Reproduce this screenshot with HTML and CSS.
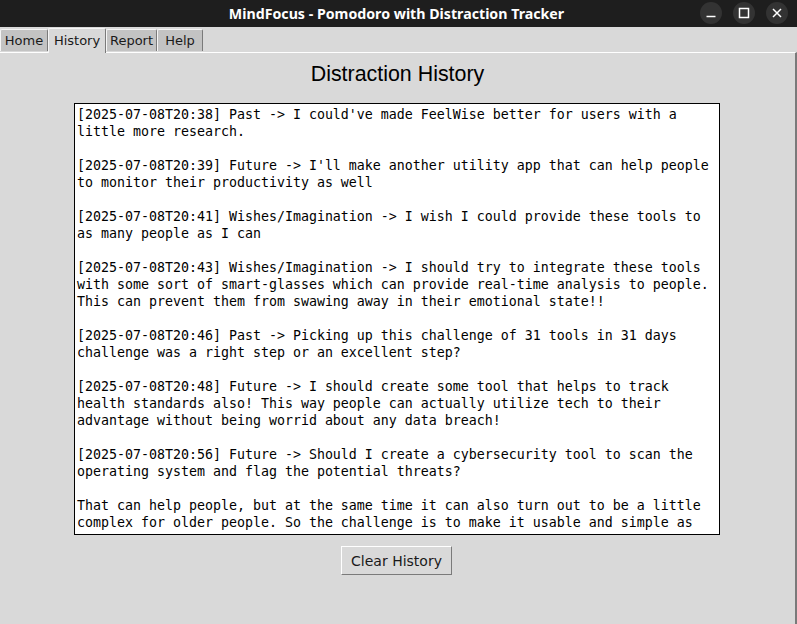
FILE: index.html
```html
<!DOCTYPE html>
<html>
<head>
<meta charset="utf-8">
<link rel="stylesheet" href="styles.css">
</head>
<body>
<div class="window">
  <div class="titlebar">
    <div class="title">MindFocus - Pomodoro with Distraction Tracker</div>
    <div class="controls">
      <span class="ctl"><svg width="22" height="22" viewBox="0 0 22 22"><line x1="6.5" y1="14.5" x2="15.5" y2="14.5" stroke="#fff" stroke-width="1.5"/></svg></span>
      <span class="ctl"><svg width="22" height="22" viewBox="0 0 22 22"><rect x="6.5" y="6.5" width="9" height="9" fill="none" stroke="#fff" stroke-width="1.5"/></svg></span>
      <span class="ctl"><svg width="22" height="22" viewBox="0 0 22 22"><path d="M7 7 L15 15 M15 7 L7 15" stroke="#fff" stroke-width="1.5"/></svg></span>
    </div>
  </div>
  <div class="tabs">
    <div class="tab tab-home">Home</div>
    <div class="tab tab-history active">History</div>
    <div class="tab tab-report">Report</div>
    <div class="tab tab-help">Help</div>
  </div>
  <div class="pane">
    <h1 class="heading">Distraction History</h1>
    <div class="textbox"><pre class="log">[2025-07-08T20:38] Past -> I could've made FeelWise better for users with a
little more research.

[2025-07-08T20:39] Future -> I'll make another utility app that can help people
to monitor their productivity as well

[2025-07-08T20:41] Wishes/Imagination -> I wish I could provide these tools to
as many people as I can

[2025-07-08T20:43] Wishes/Imagination -> I should try to integrate these tools
with some sort of smart-glasses which can provide real-time analysis to people.
This can prevent them from swawing away in their emotional state!!

[2025-07-08T20:46] Past -> Picking up this challenge of 31 tools in 31 days
challenge was a right step or an excellent step?

[2025-07-08T20:48] Future -> I should create some tool that helps to track
health standards also! This way people can actually utilize tech to their
advantage without being worrid about any data breach!

[2025-07-08T20:56] Future -> Should I create a cybersecurity tool to scan the
operating system and flag the potential threats?

That can help people, but at the same time it can also turn out to be a little
complex for older people. So the challenge is to make it usable and simple as</pre></div>
    <button class="btn">Clear History</button>
  </div>
</div>
</body>
</html>
```

FILE: styles.css
```css
html, body {
  margin: 0;
  padding: 0;
  width: 797px;
  height: 624px;
  overflow: hidden;
  background: #d9d9d9;
}
.window {
  display: flex;
  flex-direction: column;
  height: 624px;
}
.titlebar {
  height: 27px;
  background: #1e1e1e;
  display: flex;
  align-items: center;
  justify-content: center;
  position: relative;
  flex-shrink: 0;
}
.title {
  color: #ffffff;
  font-family: "Noto Sans", "DejaVu Sans", sans-serif;
  font-weight: bold;
  font-size: 14.2px;
  padding-right: 4px;
}
.controls {
  position: absolute;
  right: 9px;
  top: 2px;
  display: flex;
  gap: 11px;
}
.ctl {
  width: 22px;
  height: 22px;
  border-radius: 50%;
  background: #333333;
  display: block;
}
.ctl svg { display: block; }
.tabs {
  height: 25px;
  display: flex;
  align-items: flex-end;
  background: #d9d9d9;
  flex-shrink: 0;
  position: relative;
  z-index: 1;
}
.tab {
  box-sizing: border-box;
  font-family: "DejaVu Sans", sans-serif;
  font-size: 13px;
  color: #1a1a1a;
  background: #c3c3c3;
  height: 22px;
  line-height: 21px;
  text-align: center;
  border-left: 1px solid #f5f5f5;
  border-top: 1px solid #f5f5f5;
  border-right: 1px solid #7a7a7a;
  border-radius: 2px 2px 0 0;
  margin-bottom: 1px;
}
.tab-home { width: 48px; }
.tab-history { width: 58px; }
.tab-report { width: 51px; }
.tab-help { width: 46px; }
.tab.active {
  background: #d9d9d9;
  height: 25px;
  line-height: 24px;
  margin-bottom: -1px;
}
.pane {
  flex: 1;
  border-top: 1px solid #ffffff;
  border-right: 2px solid #7a7a7a;
  display: flex;
  flex-direction: column;
  align-items: center;
}
.heading {
  margin: 9px 0 0 0;
  font-family: "Liberation Sans", Arial, sans-serif;
  font-weight: normal;
  font-size: 21.4px;
  line-height: 24px;
  color: #000;
  height: 24px;
}
.textbox {
  margin-top: 17px;
  margin-right: 1px;
  width: 644px;
  height: 430px;
  border: 1px solid #000;
  background: #ffffff;
  overflow: hidden;
}
.log {
  margin: 0;
  padding: 2px 2px;
  font-family: "DejaVu Sans Mono", monospace;
  font-size: 13.29px;
  line-height: 17px;
  color: #000;
  white-space: pre;
}
.btn {
  margin-top: 11px;
  margin-right: 2px;
  width: 111px;
  height: 29px;
  background: #d9d9d9;
  border-top: 1px solid #ffffff;
  border-left: 1px solid #ffffff;
  border-right: 1px solid #7a7a7a;
  border-bottom: 1px solid #7a7a7a;
  font-family: "DejaVu Sans", sans-serif;
  font-size: 14px;
  color: #1a1a1a;
  padding: 0;
}
```
